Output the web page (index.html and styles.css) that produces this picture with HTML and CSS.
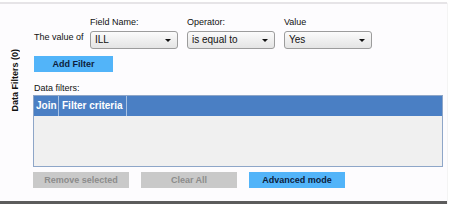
FILE: index.html
```html
<!DOCTYPE html>
<html lang="en">
<head>
  <meta charset="UTF-8">
  <title>Data Filters</title>
  <link rel="stylesheet" href="styles.css">
</head>
<body>
  <div class="panel">
    <div class="side"><span class="side-title">Data Filters (0)</span></div>
    <div class="content">
      <div class="criteria">
        <span class="lead">The value of</span>
        <div class="field">
          <label>Field Name:</label>
          <div class="select">ILL<span class="caret"></span></div>
        </div>
        <div class="field">
          <label>Operator:</label>
          <div class="select">is equal to<span class="caret"></span></div>
        </div>
        <div class="field">
          <label>Value</label>
          <div class="select">Yes<span class="caret"></span></div>
        </div>
      </div>
      <button class="btn btn-blue add">Add Filter</button>
      <p class="list-label">Data filters:</p>
      <div class="grid">
        <div class="grid-head">
          <span class="col-join">Join</span>
          <span class="col-crit">Filter criteria</span>
        </div>
        <div class="grid-body"></div>
      </div>
      <div class="actions">
        <button class="btn btn-gray">Remove selected</button>
        <button class="btn btn-gray">Clear All</button>
        <button class="btn btn-blue">Advanced mode</button>
      </div>
    </div>
  </div>
</body>
</html>
```

FILE: styles.css
```css
body {
  margin: 0;
  background: #ffffff;
  font-family: "Liberation Sans", Arial, sans-serif;
  font-size: 9px;
  color: #111;
}
.panel {
  display: flex;
  width: 447px;
  height: 202px;
  margin-top: 2px;
  background: #fdfcfe;
  border-top: 2px solid #e6e4e7;
  border-bottom: 3px solid #5c5c5c;
  box-shadow: 0 1px 1px rgba(0, 0, 0, 0.25);
  box-sizing: border-box;
}
.side {
  width: 33px;
  display: flex;
  align-items: flex-start;
  justify-content: center;
  padding-top: 45px;
  box-sizing: border-box;
}
.side-title {
  writing-mode: vertical-rl;
  transform: rotate(180deg);
  font-weight: bold;
  font-size: 9px;
  margin-right: 4px;
}
.content {
  flex: 1;
  padding-top: 13px;
}
.criteria {
  display: flex;
  align-items: flex-end;
}
.lead {
  width: 56px;
  padding-left: 1px;
  margin-bottom: 7px;
}
.field {
  width: 88px;
  margin-right: 9px;
}
.field label {
  display: block;
  height: 14px;
  line-height: 11px;
}
.select {
  position: relative;
  height: 18px;
  line-height: 16px;
  padding-left: 4px;
  border: 1px solid #9c9c9c;
  border-radius: 3px;
  background: linear-gradient(#fbfbfb, #e4e4e4);
  box-sizing: border-box;
  font-size: 10px;
}
.caret {
  position: absolute;
  right: 6px;
  top: 7px;
  border-left: 3px solid transparent;
  border-right: 3px solid transparent;
  border-top: 3px solid #111;
}
.btn {
  display: block;
  height: 16px;
  padding: 0;
  border: none;
  font-family: "Liberation Sans", Arial, sans-serif;
  font-size: 9px;
  font-weight: bold;
}
.btn-blue {
  background: #52b4f9;
  color: #0d1d3c;
}
.btn-gray {
  background: #c9c9c9;
  color: #8c8c8c;
}
.add {
  width: 79px;
  margin: 7px 0 0 1px;
}
.list-label {
  margin: 11px 0 0 1px;
  line-height: 11px;
}
.grid {
  width: 410px;
  height: 72px;
  margin-top: 1px;
  border: 1px solid #8ea6c8;
  background: #f0f0f0;
  box-sizing: border-box;
}
.grid-head {
  display: flex;
  height: 20px;
  background: #4a7fc4;
  color: #fff;
  font-size: 10px;
  font-weight: bold;
  line-height: 20px;
}
.grid-head span {
  border-right: 1px solid #a9c2e3;
  box-sizing: border-box;
}
.col-join {
  width: 25px;
  padding-left: 2px;
}
.col-crit {
  width: 68px;
  padding-left: 3px;
}
.actions {
  display: flex;
  gap: 12px;
  margin-top: 5px;
}
.actions .btn {
  width: 96px;
}
```
